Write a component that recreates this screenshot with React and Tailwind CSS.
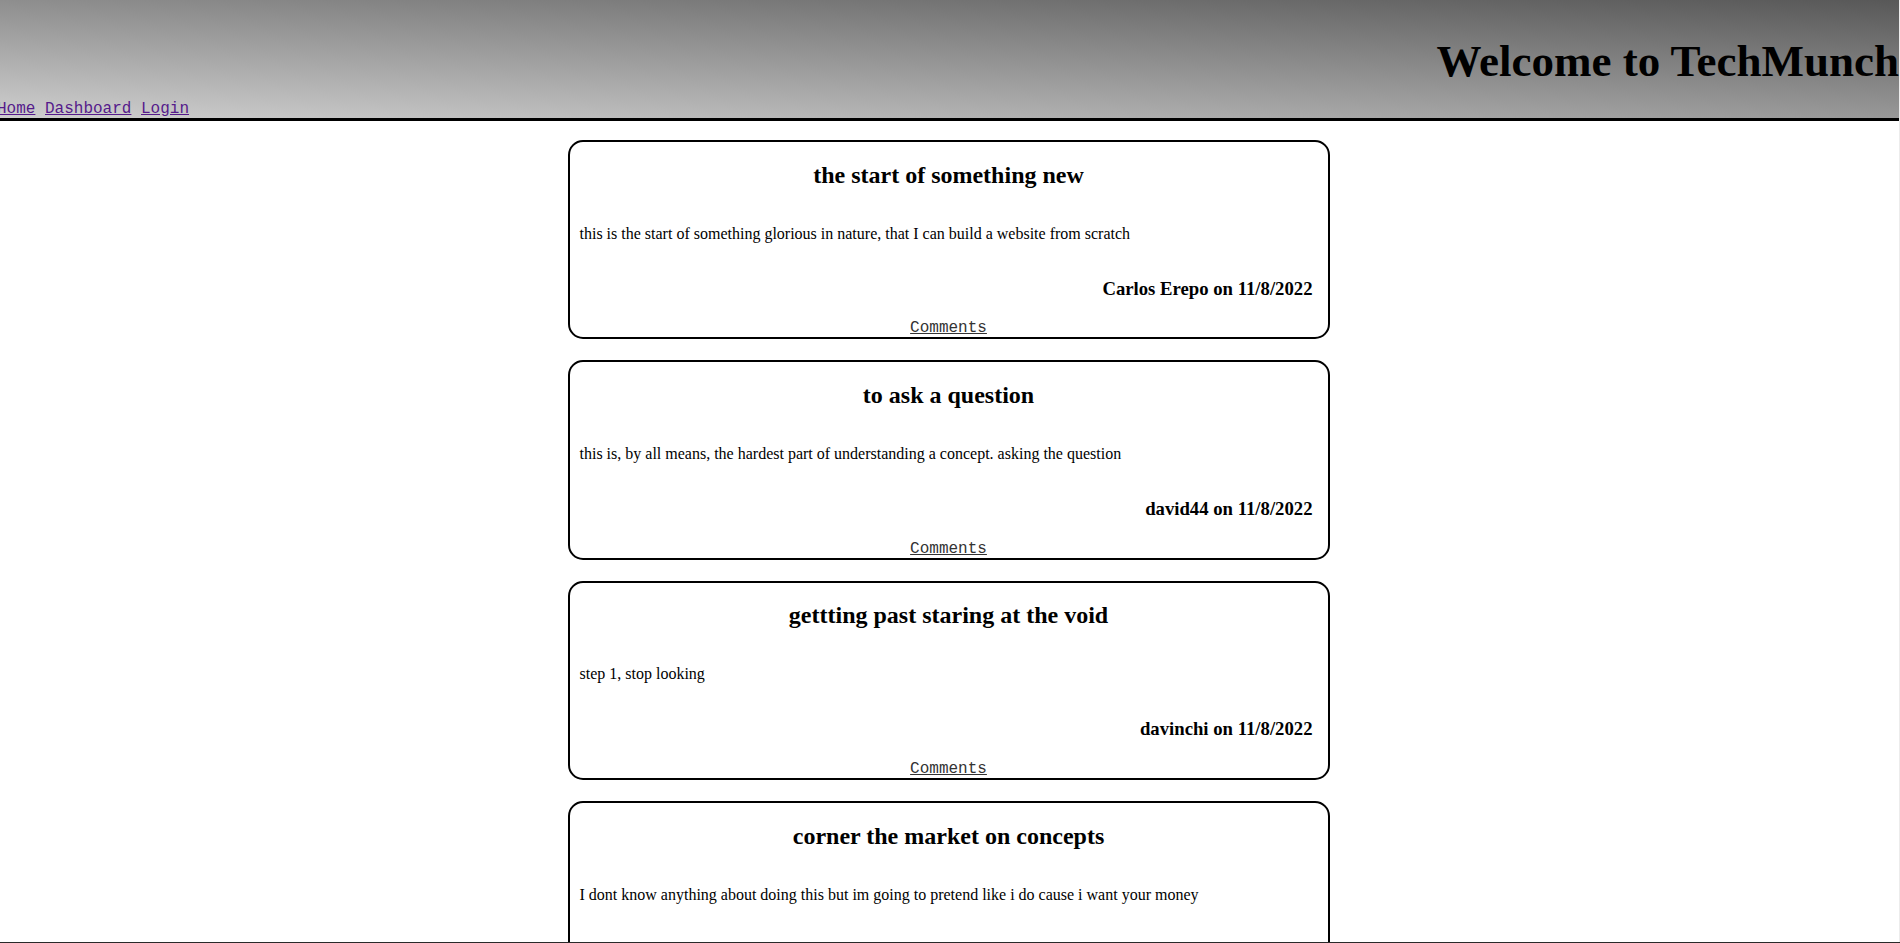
import React from "react";

const posts = [
  {
    title: "the start of something new",
    body: "this is the start of something glorious in nature, that I can build a website from scratch",
    author: "Carlos Erepo",
    date: "11/8/2022",
  },
  {
    title: "to ask a question",
    body: "this is, by all means, the hardest part of understanding a concept. asking the question",
    author: "david44",
    date: "11/8/2022",
  },
  {
    title: "gettting past staring at the void",
    body: "step 1, stop looking",
    author: "davinchi",
    date: "11/8/2022",
  },
  {
    title: "corner the market on concepts",
    body: "I dont know anything about doing this but im going to pretend like i do cause i want your money",
    author: "Carlos Erepo",
    date: "11/8/2022",
  },
];

function Card({ post }) {
  return (
    <div className="w-[762px] mx-auto flex flex-col border-2 border-black rounded-[15px] px-[10px] shrink-0">
      <h2 className="text-[24px] font-bold text-center leading-[normal] my-[19.92px]">{post.title}</h2>
      <p className="text-[16px] leading-[normal] my-[16px]">{post.body}</p>
      <h3 className="text-[18.72px] font-bold text-right leading-[normal] my-[18.72px] pr-[5px]">
        {post.author} on {post.date}
      </h3>
      <div className="text-center leading-[normal]">
        <a href="#" className="underline text-[#333] text-[16px] font-['Liberation_Mono',monospace]">
          Comments
        </a>
      </div>
    </div>
  );
}

export default function App() {
  return (
    <div className="h-screen flex flex-col overflow-hidden border-b border-[#2a2a2a] bg-white text-black font-['Liberation_Serif','Times_New_Roman',serif]">
      <div className="flex-1 min-h-0 overflow-hidden border-r border-[#ececec] flex flex-col">
        <header className="h-[121px] shrink-0 flex flex-col border-b-[3px] border-black bg-[linear-gradient(3deg,#cecece,#585858)]">
          <h1 className="text-[45px] font-bold text-right leading-[normal] pt-[35px]">Welcome to TechMunch</h1>
          <nav className="mt-auto flex gap-[9.6px] -ml-[3px] text-[16px] leading-[18px] font-['Liberation_Mono',monospace]">
            <a href="#" className="underline text-[#551a8b]">Home</a>
            <a href="#" className="underline text-[#551a8b]">Dashboard</a>
            <a href="#" className="underline text-[#551a8b]">Login</a>
          </nav>
        </header>
        <main className="flex flex-col gap-[21px] pt-[19px] pr-[2px]">
          {posts.map((p, i) => (
            <Card key={i} post={p} />
          ))}
        </main>
      </div>
    </div>
  );
}
